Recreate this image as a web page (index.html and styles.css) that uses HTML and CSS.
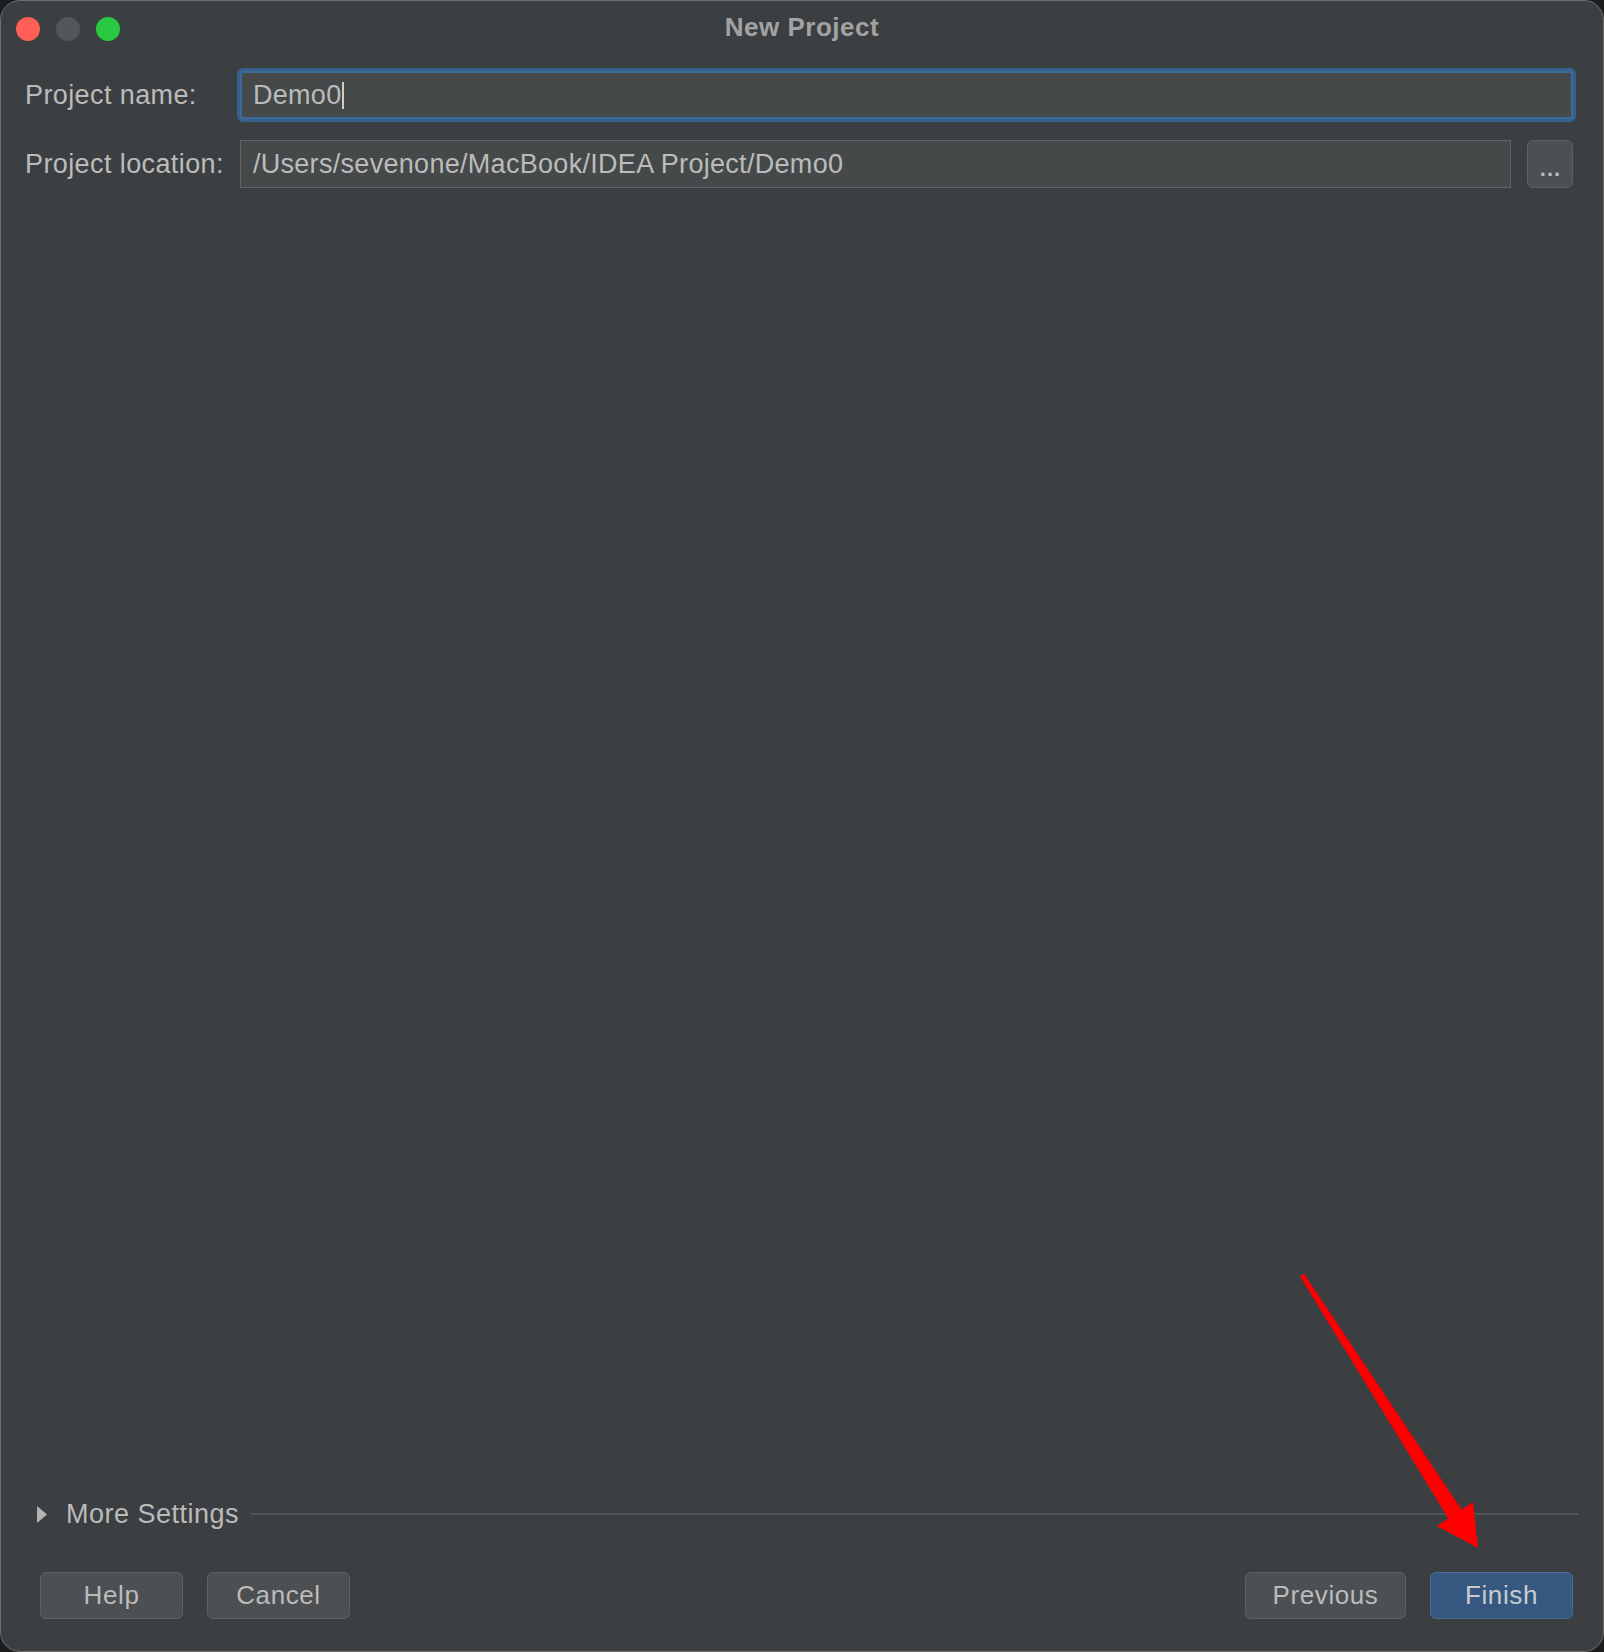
FILE: index.html
```html
<!DOCTYPE html>
<html>
<head>
  <meta charset="utf-8">
  <link rel="stylesheet" href="styles.css">
</head>
<body>
  <div class="window">
    <div class="titlebar">
      <div class="lights">
        <span class="light close"></span>
        <span class="light min"></span>
        <span class="light max"></span>
      </div>
      <div class="title">New Project</div>
      <div></div>
    </div>

    <div class="form">
      <label class="label">Project name:</label>
      <div class="field focused wide"><span>Demo0</span><span class="caret"></span></div>

      <label class="label">Project location:</label>
      <div class="field"><span>/Users/sevenone/MacBook/IDEA Project/Demo0</span></div>
      <button class="browse">...</button>
    </div>

    <div class="spacer"></div>

    <div class="more">
      <svg class="arrow-right" width="10" height="17" viewBox="0 0 10 17"><path d="M0 0 L10 8.5 L0 17 Z" fill="#b4b4b4"/></svg>
      <span>More Settings</span>
      <div class="rule"></div>
    </div>

    <div class="footer">
      <div class="group">
        <button class="btn">Help</button>
        <button class="btn">Cancel</button>
      </div>
      <div class="group">
        <button class="btn prev">Previous</button>
        <button class="btn primary">Finish</button>
      </div>
    </div>

    <!-- annotation arrow drawn over the dialog -->
    <svg class="annotation" viewBox="0 0 1604 1652" width="1604" height="1652">
      <polygon fill="#ff0000" points="1300,1276.3 1304,1273.7 1461.7,1509.7 1473,1502 1478,1548 1437,1526 1448.3,1518.3"/>
    </svg>
  </div>
</body>
</html>
```

FILE: styles.css
```css
html, body {
  margin: 0;
  padding: 0;
  background: #1c1d1f;
}
body {
  font-family: "Liberation Sans", Arial, sans-serif;
  color: #bbbbbb;
}
.window {
  position: relative;
  box-sizing: border-box;
  width: 1604px;
  height: 1652px;
  background: #3c3f41;
  border: 1px solid #6e6e6e;
  border-radius: 20px;
  display: flex;
  flex-direction: column;
  overflow: hidden;
}
.titlebar {
  height: 54px;
  display: grid;
  grid-template-columns: 1fr auto 1fr;
  align-items: center;
}
.lights {
  display: flex;
  gap: 16px;
  padding-left: 15px;
  margin-top: 1px;
}
.light {
  width: 24px;
  height: 24px;
  border-radius: 50%;
}
.light.close { background: #ff5f57; }
.light.min { background: #54575a; }
.light.max { background: #28c840; }
.title {
  font-size: 26px;
  font-weight: bold;
  letter-spacing: 0.5px;
  color: #a2a2a2;
  margin-top: -2px;
}
.form {
  display: grid;
  grid-template-columns: auto 1fr 46px;
  column-gap: 16px;
  row-gap: 21px;
  align-items: center;
  padding: 16px 30px 0 24px;
}
.label {
  font-size: 27px;
  letter-spacing: 0.4px;
  color: #bbbbbb;
}
.field {
  box-sizing: border-box;
  height: 48px;
  background: #45494a;
  border: 1px solid #646464;
  display: flex;
  align-items: center;
  padding-left: 12px;
  font-size: 27px;
  letter-spacing: 0.3px;
  color: #bbbbbb;
}
.field.wide {
  grid-column: 2 / 4;
}
.field.focused {
  border: 2px solid #3b6b9a;
  box-shadow: 0 0 0 3px #35618c;
  border-radius: 3px;
  padding-left: 11px;
}
.caret {
  display: inline-block;
  width: 2px;
  height: 27px;
  background: #cccccc;
  margin-left: 1px;
}
.browse {
  box-sizing: border-box;
  height: 48px;
  width: 46px;
  background: #4c5052;
  border: 1.5px solid #5e6162;
  border-radius: 6px;
  color: #bbbbbb;
  font-family: inherit;
  font-size: 22px;
  font-weight: bold;
  letter-spacing: 1px;
  padding: 10px 0 0 1px;
}
.spacer {
  flex: 1;
}
.more {
  display: flex;
  align-items: center;
  padding: 0 25px 0 36px;
  height: 40px;
  font-size: 27px;
  letter-spacing: 0.5px;
  color: #bbbbbb;
}
.arrow-right {
  margin-right: 19px;
}
.rule {
  flex: 1;
  height: 2px;
  background: #515456;
  margin-left: 12px;
}
.footer {
  display: flex;
  justify-content: space-between;
  padding: 38px 30px 32px 39px;
}
.group {
  display: flex;
  gap: 24px;
}
.btn {
  box-sizing: border-box;
  height: 47px;
  width: 143px;
  background: #4c5052;
  border: 1.5px solid #5e6162;
  border-radius: 6px;
  color: #bbbbbb;
  font-family: inherit;
  font-size: 26px;
  letter-spacing: 0.6px;
  padding: 0;
}
.btn.prev {
  width: 161px;
}
.btn.primary {
  background: #365880;
  border-color: #4b6f93;
  color: #c8ccd0;
}
.annotation {
  position: absolute;
  left: -1px;
  top: -1px;
  pointer-events: none;
}
```
